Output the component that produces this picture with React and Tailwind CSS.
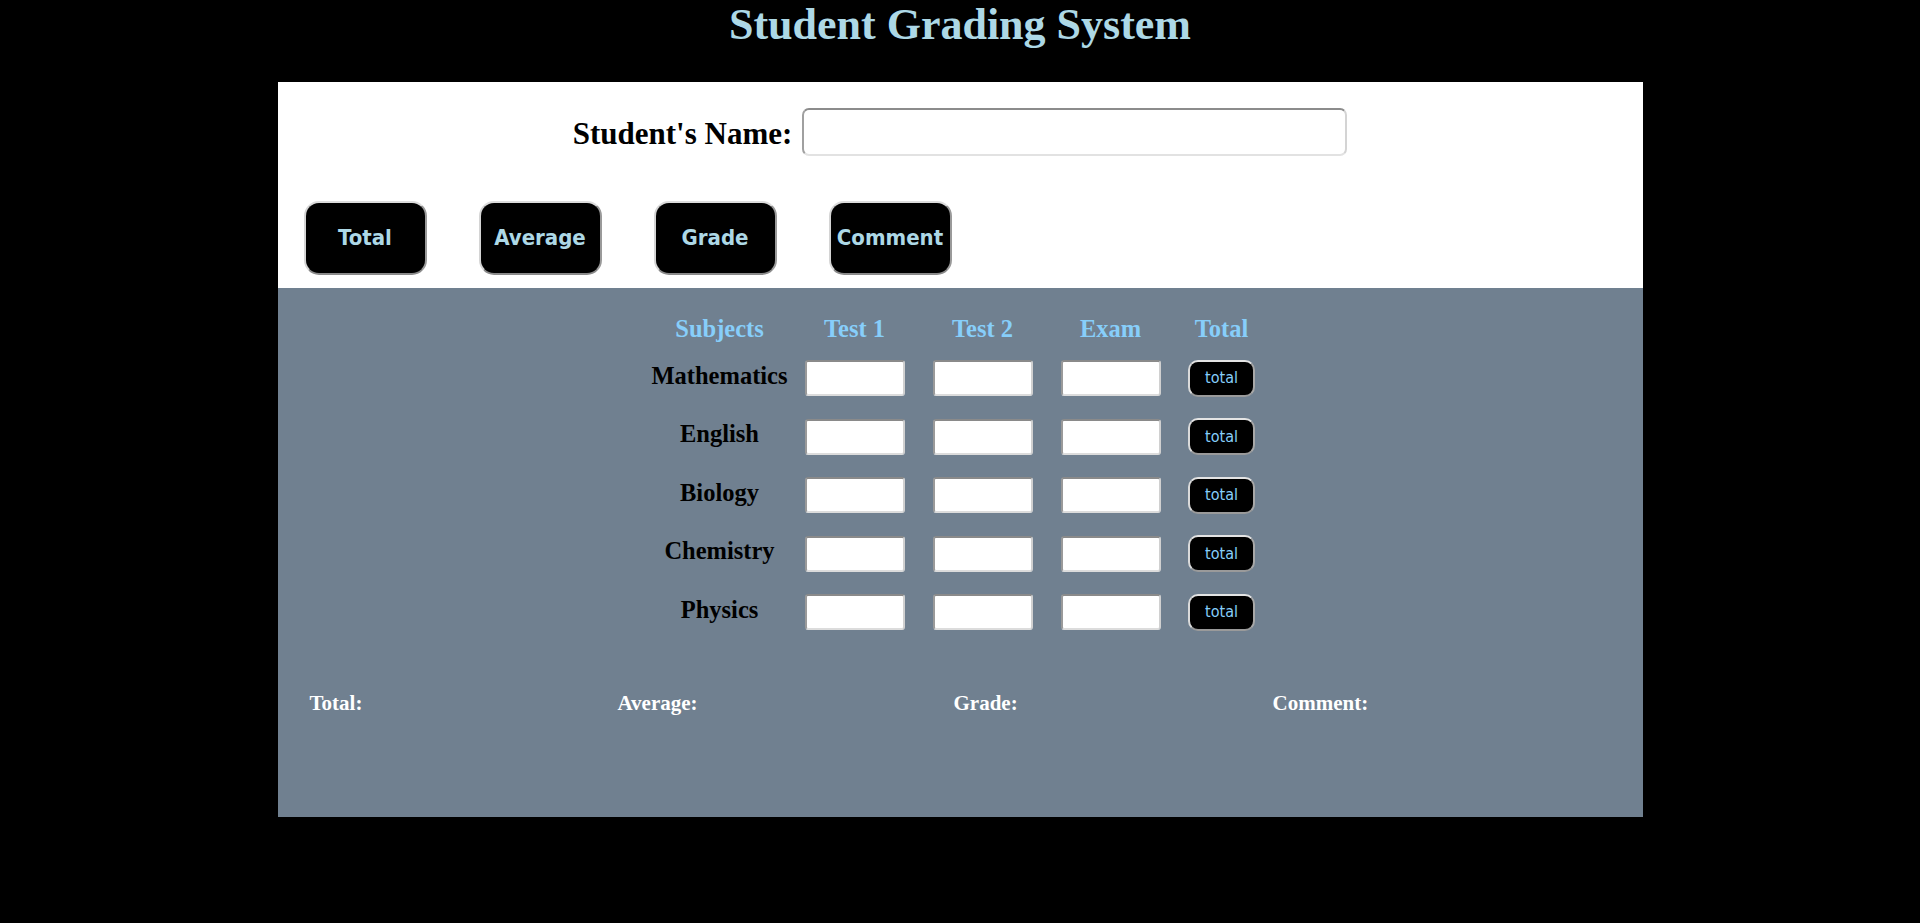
import React from "react";

const subjects = ["Mathematics", "English", "Biology", "Chemistry", "Physics"];
const actions = ["Total", "Average", "Grade", "Comment"];
const results = [
  { label: "Total:", w: "w-[308px]" },
  { label: "Average:", w: "w-[336px]" },
  { label: "Grade:", w: "w-[319px]" },
  { label: "Comment:", w: "w-auto" },
];

const scoreInput =
  "w-[100px] h-[36px] bg-white rounded-[3px] border-2 border-t-[#8a8a8a] border-l-[#9a9a9a] border-b-[#dcdcdc] border-r-[#d0d0d0] outline-none px-1";

export default function App() {
  return (
    <div className="min-h-screen bg-black font-['Liberation_Serif',serif]">
      <h1 className="text-center text-[44px] leading-[49px] font-bold text-[#add8e6]">
        Student Grading System
      </h1>

      <div className="mx-auto mt-[33px] w-[1365px]">
        {/* top white part */}
        <div className="h-[206px] bg-white pt-[25px]">
          <div className="flex items-center justify-center gap-[10px]">
            <label className="mt-[4px] text-[31px] font-bold text-black">
              Student's Name:
            </label>
            <input
              type="text"
              className="h-[48px] w-[545px] rounded-[7px] border-2 border-t-[#8c8c8c] border-l-[#a0a0a0] border-b-[#e2e2e2] border-r-[#d4d4d4] bg-white px-2 outline-none"
            />
          </div>

          <div className="mt-[43px] flex gap-[52px] pl-[26px]">
            {actions.map((a) => (
              <button
                key={a}
                className="h-[74px] w-[123px] rounded-[15px] border-2 border-t-[#dcdcdc] border-l-[#d4d4d4] border-b-[#8a8a8a] border-r-[#9a9a9a] bg-black font-['DejaVu_Sans_Condensed','DejaVu_Sans',sans-serif] text-[22px] font-bold text-[#add8e6]"
              >
                {a}
              </button>
            ))}
          </div>
        </div>

        {/* scores part */}
        <div className="h-[529px] bg-[#708090] pt-[27px]">
          <div className="ml-[371px] w-[620px]">
            <div className="grid h-[28px] grid-cols-[142px_128px_128px_128px_94px] items-center text-center text-[24.5px] leading-[28px] font-bold text-[#87cefa]">
              <div>Subjects</div>
              <div>Test 1</div>
              <div>Test 2</div>
              <div>Exam</div>
              <div>Total</div>
            </div>

            <div className="mt-[6px]">
              {subjects.map((s) => (
                <div
                  key={s}
                  className="grid h-[58.5px] grid-cols-[142px_128px_128px_128px_94px] items-center justify-items-center"
                >
                  <div className="pb-[5px] text-[24.5px] leading-[28px] font-bold text-black">
                    {s}
                  </div>
                  <input type="text" className={scoreInput} />
                  <input type="text" className={scoreInput} />
                  <input type="text" className={scoreInput} />
                  <button className="h-[37px] w-[67px] rounded-[10px] border-2 border-t-[#e4e4e4] border-l-[#dadada] border-b-[#9a9a9a] border-r-[#a8a8a8] bg-black font-['DejaVu_Sans_Condensed','DejaVu_Sans',sans-serif] text-[16px] text-[#87cefa]">
                    total
                  </button>
                </div>
              ))}
            </div>
          </div>

          <div className="mt-[50px] flex pl-[32px] text-[21px] leading-[23px] font-bold text-white">
            {results.map((r) => (
              <div key={r.label} className={r.w}>
                {r.label}
              </div>
            ))}
          </div>
        </div>
      </div>
    </div>
  );
}
